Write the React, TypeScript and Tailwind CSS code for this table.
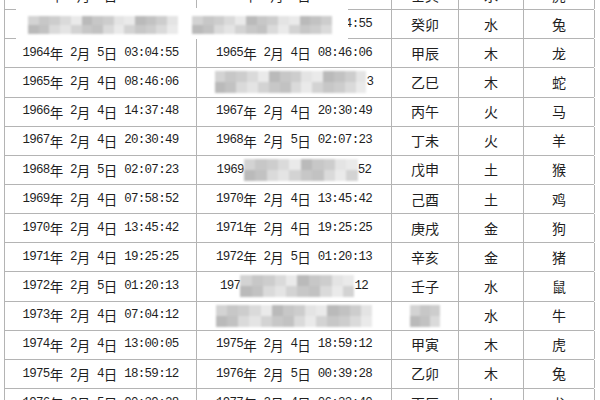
import React from "react";

// pixelated (mosaic) cover used where the source picture was censored
type Masked = { pre?: string; mask: number; post?: string };
type Cell = string | Masked;

const shades = ["#d3d3d3", "#c2c2c2", "#e4e4e4", "#bababa", "#cdcdcd", "#eaeaea", "#c7c7c7", "#dadada"];

function Mosaic({ width, height = 22 }: { width: number; height?: number }) {
  const count = Math.max(2, Math.round(width / 11));
  const bw = width / count;
  const rowsOf = [0, 1];
  return (
    <span
      className="inline-flex flex-col align-middle blur-[1.2px]"
      style={{ width, height }}
    >
      {rowsOf.map((r) => (
        <span key={r} className="flex flex-1">
          {Array.from({ length: count }).map((_, i) => (
            <span
              key={i}
              className="h-full"
              style={{ width: bw, background: shades[(i * 5 + r * 3 + (i % 3)) % shades.length] }}
            />
          ))}
        </span>
      ))}
    </span>
  );
}

// dates mix half-width digits and full-width CJK glyphs
function DateText({ text }: { text: string }) {
  const parts = text.split(/([年月日])/).filter((p) => p !== "");
  return (
    <>
      {parts.map((p, i) =>
        /[年月日]/.test(p) ? (
          <span key={i} className="font-['Noto_Sans_CJK_SC',sans-serif] text-[13.5px] tracking-normal">
            {p}
          </span>
        ) : (
          <span key={i} className="whitespace-pre">
            {p}
          </span>
        )
      )}
    </>
  );
}

function renderCell(cell: Cell, isDate: boolean) {
  if (typeof cell === "string") {
    return isDate ? <DateText text={cell} /> : cell;
  }
  return (
    <span className="inline-flex items-center">
      {cell.pre && <DateText text={cell.pre} />}
      <Mosaic width={cell.mask} />
      {cell.post && <DateText text={cell.post} />}
    </span>
  );
}

const rows: Cell[][] = [
  ["1962年 2月 4日 15:17:56", "1963年 2月 4日 21:07:47", "壬寅", "水", "虎"],
  ["1963年 2月 4日 21:07:47", "1964年 2月 5日 03:04:55", "癸卯", "水", "兔"],
  ["1964年 2月 5日 03:04:55", "1965年 2月 4日 08:46:06", "甲辰", "木", "龙"],
  ["1965年 2月 4日 08:46:06", { mask: 152, post: "3" }, "乙巳", "木", "蛇"],
  ["1966年 2月 4日 14:37:48", "1967年 2月 4日 20:30:49", "丙午", "火", "马"],
  ["1967年 2月 4日 20:30:49", "1968年 2月 5日 02:07:23", "丁未", "火", "羊"],
  ["1968年 2月 5日 02:07:23", { pre: "1969", mask: 114, post: "52" }, "戊申", "土", "猴"],
  ["1969年 2月 4日 07:58:52", "1970年 2月 4日 13:45:42", "己酉", "土", "鸡"],
  ["1970年 2月 4日 13:45:42", "1971年 2月 4日 19:25:25", "庚戌", "金", "狗"],
  ["1971年 2月 4日 19:25:25", "1972年 2月 5日 01:20:13", "辛亥", "金", "猪"],
  ["1972年 2月 5日 01:20:13", { pre: "197", mask: 114, post: "12" }, "壬子", "水", "鼠"],
  ["1973年 2月 4日 07:04:12", { mask: 156 }, { mask: 30 }, "水", "牛"],
  ["1974年 2月 4日 13:00:05", "1975年 2月 4日 18:59:12", "甲寅", "木", "虎"],
  ["1975年 2月 4日 18:59:12", "1976年 2月 5日 00:39:28", "乙卯", "木", "兔"],
  ["1976年 2月 5日 00:39:28", "1977年 2月 4日 06:33:40", "丙辰", "火", "龙"],
];

export default function App() {
  return (
    <div className="w-[600px] h-[400px] overflow-hidden bg-white">
      <div className="ml-[4px] mt-[-19px] w-[590px] border-l border-[#b4b4b4] text-[#1f1f1f]">
        {rows.map((row, r) => (
          <div
            key={r}
            className="relative grid grid-cols-[192px_195px_67px_65px_71px] h-[29.15px] border-b border-[#b4b4b4]"
          >
            {row.map((cell, c) => (
              <div
                key={c}
                className={
                  c < 2
                    ? "flex items-center justify-center border-r border-[#b4b4b4] font-['Liberation_Mono','Noto_Sans_CJK_SC',monospace] text-[12.5px] tracking-[-0.7px]"
                    : "flex items-center justify-center border-r border-[#b4b4b4] font-['Noto_Sans_CJK_SC',sans-serif] text-[14px]"
                }
              >
                {renderCell(cell, c < 2)}
              </div>
            ))}
            {r === 1 && (
              <div className="absolute left-[11px] top-[-2px] w-[332px] h-[34px] bg-white flex items-center gap-[14px] pl-[12px]">
                <Mosaic width={150} height={18} />
                <Mosaic width={140} height={18} />
              </div>
            )}
          </div>
        ))}
      </div>
    </div>
  );
}
